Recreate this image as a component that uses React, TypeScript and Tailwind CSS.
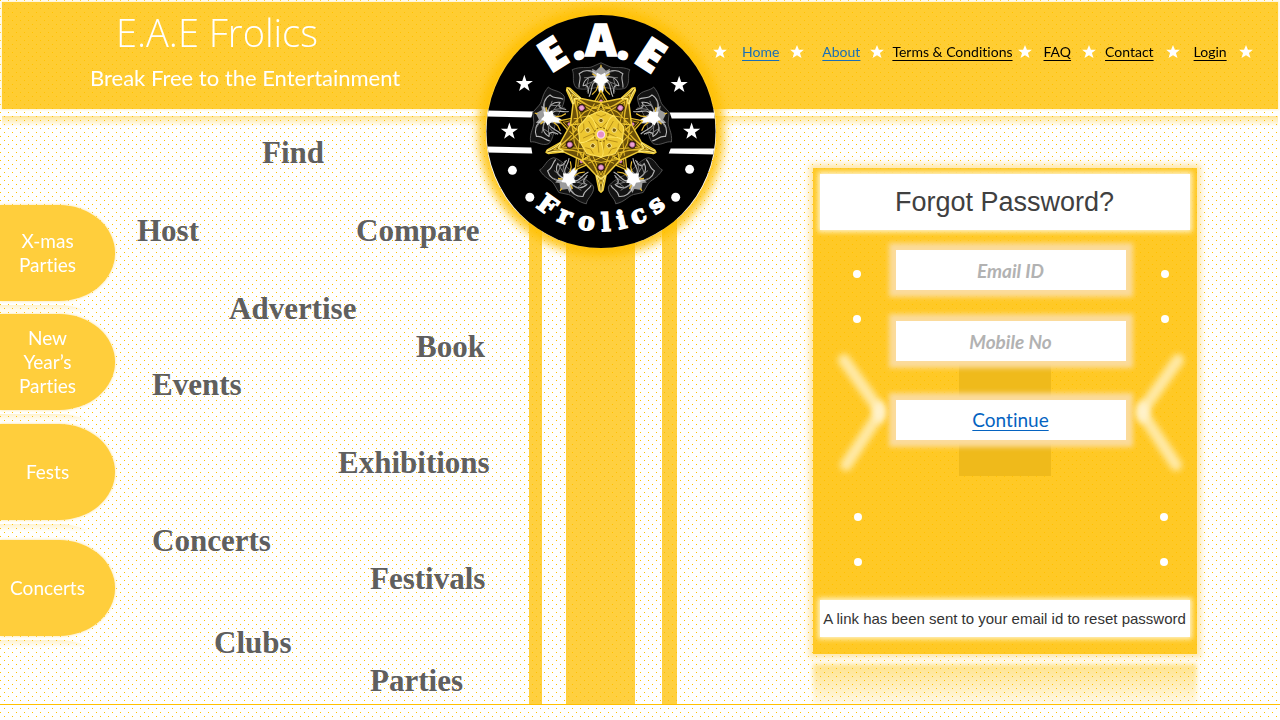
import React from "react";

const LATO = "font-['Lato','Open_Sans',sans-serif] [font-variant-ligatures:none]";

type StarProps = { className?: string };

function Star({ className }: StarProps) {
  return (
    <svg viewBox="0 0 20 19" className={className} aria-hidden="true">
      <path
        d="M10 0l2.800 6.800H20l-5.700 4.900L16.600 19 10 15 3.400 19l2.300-7.300L0 6.800h7.200z"
        fill="#fff"
      />
    </svg>
  );
}

const links = [
  { label: "Home", tone: "text-[#1b6fb5]", space: "ml-[15px] mr-[11px]" },
  { label: "About", tone: "text-[#1b6fb5]", space: "ml-[18px] mr-[10px]" },
  { label: "Terms & Conditions", tone: "text-black", space: "ml-[8px] mr-[5px]" },
  { label: "FAQ", tone: "text-black", space: "ml-[12px] mr-[11px]" },
  { label: "Contact", tone: "text-black", space: "ml-[9px] mr-[12px]" },
  { label: "Login", tone: "text-black", space: "ml-[14px] mr-[12px]" },
];

const tabs = [
  { lines: ["X-mas", "Parties"], gap: "" },
  { lines: ["New", "Year’s", "Parties"], gap: "mt-[13px]" },
  { lines: ["Fests"], gap: "mt-[14px]" },
  { lines: ["Concerts"], gap: "mt-[20px]" },
];

const words = [
  { row: "pl-[146px] mt-[25px]", items: ["Find"] },
  { row: "pl-[21px] mt-10", items: ["Host", "Compare"] },
  { row: "pl-[113px] mt-10", items: ["Advertise"] },
  { row: "pl-[300px]", items: ["Book"] },
  { row: "pl-[36px]", items: ["Events"] },
  { row: "pl-[222px] mt-10", items: ["Exhibitions"] },
  { row: "pl-[36px] mt-10", items: ["Concerts"] },
  { row: "pl-[254px]", items: ["Festivals"] },
  { row: "pl-[98px] mt-[26px]", items: ["Clubs"] },
  { row: "pl-[254px]", items: ["Parties"] },
];

const topLetters = [
  { ch: "E", a: -32 },
  { ch: ".", a: -16 },
  { ch: "A", a: 0 },
  { ch: ".", a: 16 },
  { ch: "E", a: 33 },
];

const bottomLetters = [
  { ch: "F", a: 36 },
  { ch: "r", a: 23 },
  { ch: "o", a: 9 },
  { ch: "l", a: -3 },
  { ch: "i", a: -13 },
  { ch: "c", a: -24 },
  { ch: "s", a: -37 },
];

function Feather() {
  return (
    <g fill="none" strokeLinejoin="round">
      <path
        d="M0-48C-9-46-20-44-25-47C-30-53-26-60-29-65C-20-69-14-66-9-68L0-72L9-68C14-66 20-69 29-65C26-60 30-53 25-47C20-44 9-46 0-48"
        stroke="#5c5c5c" strokeWidth=".8" fill="#222" fillOpacity=".55"
      />
      <path
        d="M-4-60C-10-66-17-65-22-61C-19-56-23-52-22-47M4-60C10-66 17-65 22-61C19-56 23-52 22-47M-3-57C-12-60-17-55-18-49C-13-51-12-46-13-41M3-57C12-60 17-55 18-49C13-51 12-46 13-41M-3-53C-11-54-8-45-12-38M3-53C11-54 8-45 12-38"
        stroke="#b5b5b5" strokeWidth="1.100"
      />
      <path
        d="M-3-58L-17-57M3-58L17-57M-3-61L-14-64M3-61L14-64M-3-55L-16-50M3-55L16-50M-12-58L-15-47M12-58L15-47M-9-53L-14-43M9-53L14-43"
        stroke="#8a8a8a" strokeWidth=".8"
      />
      <path d="M-9-66L-5-64L0-69L5-64L9-66L8-60L5-55L4-48L2-42L0-37L-2-42L-4-48L-5-55L-8-60z" fill="#e6e6e6" fillOpacity=".65" />
      <path d="M-4-62L0-60L4-62L5-57L8-54L3-51L2-44L0-38L-2-44L-3-51L-8-54L-5-57z" fill="#fff" />
      <path d="M-3-49L-5-44L-9-40M3-49L5-44L9-40M-1-42L-3-37M1-42L3-37M-5-59L-9-61M5-59L9-61M0-70V-67" stroke="#e9bd32" strokeWidth="1.200" />
    </g>
  );
}

function MinorArm() {
  return (
    <g fill="none" strokeLinejoin="round">
      <path d="M-20-27L-7-32L0-44L7-32L20-27L0-18z" fill="#392904" stroke="#e6bf2c" strokeWidth="1.200" />
      <path d="M-14-27C-6-30-3-33 0-40C3-33 6-30 14-27M-18-27L0-30L18-27" stroke="#c99c1c" strokeWidth=".9" />
      <circle cx="0" cy="-33.500" r="1.700" fill="#d47db6" />
    </g>
  );
}

function StarArm() {
  return (
    <g fill="none" strokeLinejoin="round">
      <path d="M-19-26L-5-41L-2-56L0-58L2-56L5-41L19-26L0-14z" fill="#6b5009" stroke="#efca33" strokeWidth="1.500" />
      <path d="M-14-20C-8-28-5-34 0-50C5-34 8-28 14-20M-16-23C-6-26-5-37 0-44C5-37 6-26 16-23M-10-17L0-41L10-17M-17-25L0-28L17-25M-13-29L0-23L13-29" stroke="#e3ba28" strokeWidth="1" />
      <path d="M-5-41C-2-46-1-50-1-57M5-41C2-46 1-50 1-57M-4-41L0-45L4-41" stroke="#ffe972" strokeWidth="1.200" />
      <circle cx="0" cy="-33" r="4" fill="#2b1c06" />
      <circle cx="0" cy="-33" r="2.600" fill="#eba2d2" stroke="#a9548a" strokeWidth=".7" />
    </g>
  );
}

function Logo() {
  const turns = [0, 72, 144, 216, 288];
  return (
    <svg viewBox="0 0 230 234" className="h-full w-full overflow-visible" role="img" aria-label="E.A.E Frolics">
      <defs>
        <clipPath id="disc">
          <ellipse cx="115" cy="117" rx="115" ry="117" />
        </clipPath>
      </defs>
      <ellipse cx="115" cy="117" rx="115" ry="117" fill="#000" />
      <g clipPath="url(#disc)" fill="#fff">
        <path d="M0 96L47 97L45 103L0 102zM0 132L45 133L46 139L0 138z" />
        <path d="M184 98L230 98L230 104L186 104zM185 134L230 134L230 140L183 139z" />
      </g>
      <g fill="#fff">
        <circle cx="26" cy="156" r="4.500" />
        <circle cx="43.500" cy="183" r="4.500" />
        <circle cx="204" cy="155" r="4.500" />
        <circle cx="190" cy="183" r="4.500" />
        {[[38, 69], [193.500, 70], [23, 117], [206, 117]].map(([x, y]) => (
          <path
            key={`${x}-${y}`}
            transform={`translate(${x} ${y})`}
            d="M0-9L2.100-2.800H8.600L3.400 1L5.300 7.300L0 3.500L-5.300 7.300L-3.400 1L-8.600-2.800H-2.100z"
          />
        ))}
      </g>
      <g transform="translate(115 120)">
        {turns.map((t) => (
          <g key={t} transform={`rotate(${t})`}><Feather /></g>
        ))}
        {turns.map((t) => (
          <g key={t} transform={`rotate(${t})`}><MinorArm /></g>
        ))}
        {turns.map((t) => (
          <g key={t} transform={`rotate(${t + 36})`}><StarArm /></g>
        ))}
        <path d="M0-26L24.700-8L15.300 21L-15.300 21L-24.700-8z" fill="#5b4307" stroke="#c99c1c" strokeWidth="1" />
        {turns.map((t) => (
          <g key={t} transform={`rotate(${t})`} fill="none">
            <path d="M0-24C-5-22-9-20-14-18C-14-12-8-9 0-3C8-9 14-12 14-18C9-20 5-22 0-24z" fill="#edc731" stroke="#ffe560" strokeWidth="1" />
            <circle cx="0" cy="-14" r="2.200" fill="#7b5a0a" stroke="#fff0a0" strokeWidth=".8" />
            <path d="M-9-16L0-6L9-16M-5-20L0-18L5-20" stroke="#b78f18" strokeWidth=".9" />
          </g>
        ))}
        <circle r="7" fill="#f3d33e" stroke="#8a650c" strokeWidth="1.200" strokeDasharray="2 1.500" />
        <circle r="3.700" fill="#e58fc8" stroke="#fbd9ee" strokeWidth="1.200" />
      </g>
      <g fill="#fff" stroke="#fff" textAnchor="middle">
        {topLetters.map(({ ch, a }) => (
          <text
            key={a}
            x="115"
            y="41"
            strokeWidth="1.500"
            transform={`rotate(${a} 115 117)`}
            className="font-['Open_Sans',sans-serif] text-[44px] font-extrabold"
          >
            {ch}
          </text>
        ))}
        {bottomLetters.map(({ ch, a }) => (
          <text
            key={a}
            x="115"
            y="217"
            strokeWidth="1.500"
            transform={`rotate(${a} 115 117)`}
            className="font-['DejaVu_Serif',serif] text-[25px] font-bold"
          >
            {ch}
          </text>
        ))}
      </g>
    </svg>
  );
}

type SideProps = { flip?: boolean };

function SideMarks({ flip }: SideProps) {
  return (
    <svg viewBox="0 0 64 320" className={flip ? "h-[320px] w-16 -scale-x-100" : "h-[320px] w-16"} aria-hidden="true">
      <g fill="#fff">
        <circle cx="25" cy="24" r="4" />
        <circle cx="25" cy="69" r="4" />
        <circle cx="26" cy="267" r="4" />
        <circle cx="26" cy="312" r="4" />
      </g>
      <g fill="none" stroke="#ffe9a6" strokeLinejoin="round" strokeLinecap="round" className="blur-[3px]">
        <path d="M12 110L46 158Q49 162 46 166L14 215" strokeWidth="12" />
      </g>
      <ellipse cx="47" cy="162" rx="6" ry="11" fill="#fff2cc" className="blur-[3px]" />
    </svg>
  );
}

const fieldBox =
  "h-10 w-[230px] bg-white text-center shadow-[0_0_5px_7px_#fbdb9c]";

export default function App() {
  return (
    <div className="flex min-h-screen flex-col bg-white bg-[radial-gradient(circle_at_0.5px_0.5px,#ffc000_0.7px,transparent_0.8px),radial-gradient(circle_at_4.5px_4.5px,#ffc000_0.7px,transparent_0.8px)] bg-[length:8px_8px]">
      <header className="mx-[2px] mt-[2px] grid h-[107px] grid-cols-[minmax(0,523fr)_152px_minmax(0,601fr)] bg-[#ffc000]/80 shadow-[0_0_2px_1px_#fff3cd] [-webkit-box-reflect:below_7px_linear-gradient(transparent_90%,rgba(0,0,0,0.5))]">
        <div className="flex flex-col pl-[88px] text-white">
          <h1 className="pt-[7px] pl-[26px] font-['Open_Sans',sans-serif] text-[38px] leading-[46px] font-light whitespace-nowrap">
            E.A.E Frolics
          </h1>
          <p className="pt-[7px] font-['Lato',sans-serif] text-[22px] leading-[32px] whitespace-nowrap">
            Break Free to the Entertainment
          </p>
        </div>
        <nav className={`col-start-3 flex items-start pt-[40px] pl-[36px] text-[14px] leading-[20px] ${LATO}`}>
          <Star className="mt-[3px] h-[13px] w-[14px] shrink-0" />
          {links.map((l) => (
            <React.Fragment key={l.label}>
              <a href="#" className={`whitespace-nowrap underline underline-offset-[3px] ${l.tone} ${l.space}`}>
                {l.label}
              </a>
              <Star className="mt-[3px] h-[13px] w-[14px] shrink-0" />
            </React.Fragment>
          ))}
        </nav>
      </header>

      <main className="grid flex-1 grid-cols-[116px_minmax(0,409fr)_152px_minmax(0,603fr)] border-b border-[#ffc000]">
        <nav className={`pt-[96px] text-[19px] leading-[24px] text-white ${LATO}`}>
          {tabs.map((t) => (
            <a
              key={t.lines.join(" ")}
              href="#"
              className={`flex h-[96px] w-[115px] flex-col items-center justify-center rounded-r-[56px_48px] bg-[#ffce3c] pr-[20px] shadow-[0_0_3px_#ffe08a] [-webkit-box-reflect:below_4px_linear-gradient(transparent_92%,rgba(0,0,0,0.25))] ${t.gap}`}
            >
              {t.lines.map((line) => (
                <span key={line}>{line}</span>
              ))}
            </a>
          ))}
        </nav>

        <ul className="font-['Liberation_Serif',serif] text-[31px] leading-[38px] font-bold text-[#5f5f5f]">
          {words.map((w) => (
            <li key={w.items[0]} className={`flex h-[38px] ${w.row}`}>
              {w.items.map((word) => (
                <span key={word} className={w.items.length > 1 ? "w-[219px] shrink-0 last:w-auto" : ""}>
                  {word}
                </span>
              ))}
            </li>
          ))}
        </ul>

        <div className="relative flex pl-[4px]">
          <div className="w-[13px] bg-[#ffc000]/75" />
          <div className="ml-6 w-[69px] bg-[#ffc000]/75" />
          <div className="ml-auto w-[15px] bg-[#ffc000]/75" />
          <div className="absolute -top-[94px] left-1/2 h-[233px] w-[230px] -translate-x-1/2 rounded-full shadow-[0_0_10px_8px_rgba(255,192,0,0.85)]">
            <Logo />
          </div>
        </div>

        <div className="flex flex-col items-center pt-[59px] pl-[52px]">
          <form
            className="w-[384px] bg-[#ffc000]/85 px-[7px] pt-[6px] pb-[17px] shadow-[0_0_6px_4px_rgba(255,205,70,0.45)]"
            onSubmit={(e) => e.preventDefault()}
          >
            <h2 className="bg-white text-center font-['Liberation_Sans',sans-serif] text-[27px] leading-[56px] text-[#404040] shadow-[0_0_5px_2px_#fff3cc]">
              Forgot Password?
            </h2>
            <div className="flex h-[370px] justify-between pt-[20px] pl-[12px]">
              <SideMarks />
              <div className={`relative flex flex-col items-center ${LATO}`}>
                <div className="absolute top-[112px] left-[63px] h-[114px] w-[92px] bg-[#efba1b]" />
                <input
                  type="email"
                  aria-label="Email ID"
                  placeholder="Email ID"
                  className={`relative text-[19px] font-bold italic placeholder:text-[#b2b2b2] placeholder:opacity-100 ${fieldBox}`}
                />
                <input
                  type="tel"
                  aria-label="Mobile No"
                  placeholder="Mobile No"
                  className={`relative mt-[31px] text-[19px] font-bold italic placeholder:text-[#b2b2b2] placeholder:opacity-100 ${fieldBox}`}
                />
                <button
                  type="submit"
                  className={`relative mt-[39px] text-[19px] text-[#0563c1] underline underline-offset-[3px] ${fieldBox}`}
                >
                  Continue
                </button>
              </div>
              <SideMarks flip />
            </div>
            <p className="bg-white text-center font-['Liberation_Sans',sans-serif] text-[15px] leading-[37px] whitespace-nowrap text-[#333] shadow-[0_0_5px_2px_#fff3cc]">
              A link has been sent to your email id to reset password
            </p>
          </form>
          <div className="mt-[10px] w-[384px] flex-1 bg-linear-to-b from-[#ffc000]/45 to-[#ffc000]/10 blur-[2px]" />
        </div>
      </main>
      <footer className="h-[15px]" />
    </div>
  );
}
